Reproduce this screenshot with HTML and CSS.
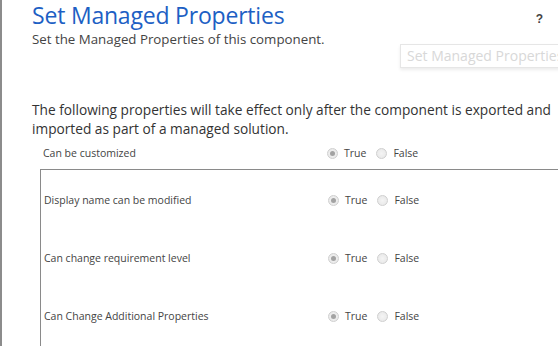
FILE: index.html
```html
<!DOCTYPE html>
<html lang="en">
<head>
<meta charset="utf-8">
<title>Set Managed Properties</title>
<link rel="stylesheet" href="styles.css">
</head>
<body>
<div class="page">
  <header class="header">
    <div class="heading">
      <h1 class="title">Set Managed Properties</h1>
      <p class="subtitle">Set the Managed Properties of this component.</p>
    </div>
    <span class="help">?</span>
  </header>
  <div class="ghost">Set Managed Properties</div>
  <p class="intro">The following properties will take effect only after the component is exported and imported as part of a managed solution.</p>

  <div class="row row-top">
    <span class="label">Can be customized</span>
    <span class="choices">
      <label class="choice"><span class="radio checked"></span>True</label>
      <label class="choice"><span class="radio"></span>False</label>
    </span>
  </div>

  <div class="box">
    <div class="row">
      <span class="label">Display name can be modified</span>
      <span class="choices">
        <label class="choice"><span class="radio checked"></span>True</label>
        <label class="choice"><span class="radio"></span>False</label>
      </span>
    </div>
    <div class="row">
      <span class="label">Can change requirement level</span>
      <span class="choices">
        <label class="choice"><span class="radio checked"></span>True</label>
        <label class="choice"><span class="radio"></span>False</label>
      </span>
    </div>
    <div class="row">
      <span class="label">Can Change Additional Properties</span>
      <span class="choices">
        <label class="choice"><span class="radio checked"></span>True</label>
        <label class="choice"><span class="radio"></span>False</label>
      </span>
    </div>
  </div>
</div>
</body>
</html>
```

FILE: styles.css
```css
html, body {
  margin: 0;
  padding: 0;
  background: #ffffff;
  height: 100%;
  overflow: hidden;
}

body {
  font-family: "Open Sans", "Noto Sans", "Liberation Sans", sans-serif;
  color: #444444;
}

.page {
  position: relative;
  display: flex;
  flex-direction: column;
  height: 100%;
  border-left: 2px solid #8c8c8c;
  padding-left: 30px;
  box-sizing: border-box;
  overflow: hidden;
}

.header {
  display: flex;
  justify-content: space-between;
  align-items: flex-start;
  padding-right: 15px;
}

.title {
  margin: 0;
  font-weight: 400;
  font-size: 23px;
  line-height: 30px;
  color: #1d5fc4;
  letter-spacing: -0.2px;
}

.subtitle {
  margin: 1px 0 0;
  font-size: 13.3px;
  line-height: 17px;
  color: #444444;
}

.help {
  margin-top: 12px;
  font-family: "Liberation Sans", sans-serif;
  font-weight: 700;
  font-size: 12px;
  color: #444444;
}

.ghost {
  position: absolute;
  left: 398px;
  top: 44px;
  width: 180px;
  height: 24px;
  box-sizing: border-box;
  border: 1px solid #e6e6e6;
  box-shadow: 0 2px 3px rgba(0, 0, 0, 0.08);
  padding-left: 6px;
  font-size: 14px;
  line-height: 22px;
  color: #d8d8d8;
  white-space: nowrap;
  overflow: hidden;
}

.intro {
  margin: 52px 0 0;
  font-size: 13.7px;
  line-height: 19px;
  color: #333333;
}

.row {
  display: grid;
  grid-template-columns: 284px auto;
  align-items: center;
  height: 58px;
  flex: none;
  padding-left: 3px;
  font-size: 10.5px;
  color: #444444;
}

.row-top {
  height: 24px;
  margin: 3px 0 4px 8px;
}

.box {
  flex: 1;
  margin-left: 8px;
  border-top: 1px solid #8a8a8a;
  border-left: 1px solid #8a8a8a;
  padding-top: 1px;
  overflow: hidden;
}

.choices {
  display: flex;
  align-items: center;
  gap: 10px;
}

.choice {
  display: flex;
  align-items: center;
  gap: 6px;
  color: #444444;
}

.radio {
  width: 11px;
  height: 11px;
  box-sizing: border-box;
  border-radius: 50%;
  border: 1px solid #cfcfcf;
  background: radial-gradient(circle, #f4f4f4 0%, #e6e6e6 100%);
  display: inline-flex;
  align-items: center;
  justify-content: center;
}

.radio.checked::after {
  content: "";
  width: 5px;
  height: 5px;
  border-radius: 50%;
  background: #a3a3a3;
}
```
